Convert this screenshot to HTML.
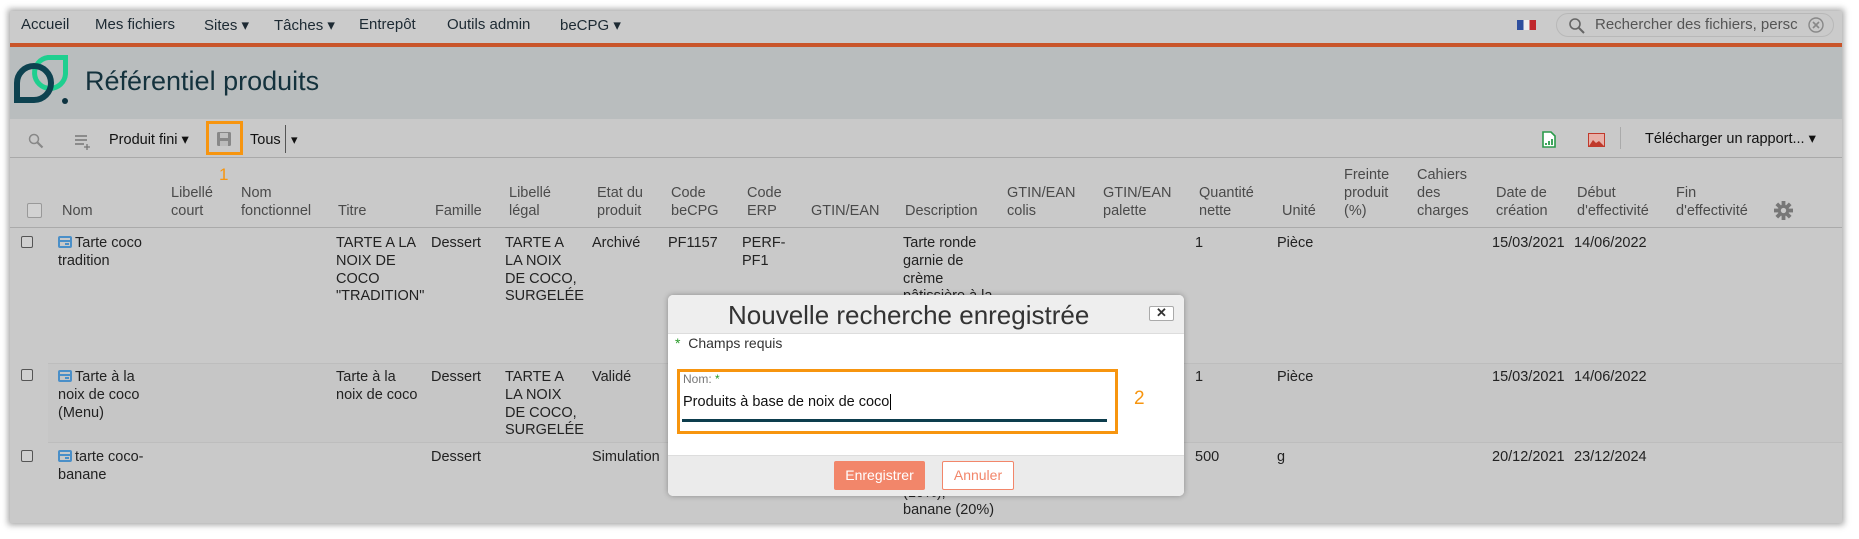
<!DOCTYPE html>
<html><head><meta charset="utf-8">
<style>
*{margin:0;padding:0;box-sizing:border-box}
body{width:1859px;height:539px;background:#fff;position:relative;overflow:hidden;font-family:"Liberation Sans",sans-serif;color:#222}
#frame{position:absolute;left:10px;top:11px;width:1832px;height:512px;background:#c9c9c9;box-shadow:0 0 6px 2px rgba(0,0,0,.35);overflow:hidden}
.a{position:absolute;white-space:nowrap}
.nav{position:absolute;left:0;top:0;width:100%;height:32px;background:#cbcbcb}
.nav .a{top:5px;font-size:15px;color:#1d2a33}
.orl{position:absolute;left:0;top:32px;width:100%;height:4px;background:#c9552a}
.hdr{position:absolute;left:0;top:36px;width:100%;height:72px;background:#b9bdbe}
.tb{position:absolute;left:0;top:108px;width:100%;height:39px;border-bottom:1px solid #a9a9a9}
.th{font-size:14.5px;color:#4a4a4a;line-height:17.8px}
.td{font-size:14.5px;color:#222;line-height:17.8px}
.cb{position:absolute;width:12px;height:12px;border:1px solid #555;border-radius:2px;background:#d0d0d0}
.pi{display:inline-block;width:14px;height:12px;border:2px solid #4a8fc8;border-radius:2px;margin-right:3px;vertical-align:-1px;position:relative}
.pi:before{content:"";position:absolute;left:0;right:0;top:2px;height:2px;background:#4a8fc8}
.pi:after{content:"";position:absolute;right:1px;bottom:1px;width:4px;height:2px;background:#4a8fc8}
</style></head><body>
<div id="frame">
 <div class="nav">
  <span class="a" style="left:11px">Accueil</span>
  <span class="a" style="left:85px">Mes fichiers</span>
  <span class="a" style="left:194px">Sites ▾</span>
  <span class="a" style="left:264px">Tâches ▾</span>
  <span class="a" style="left:349px">Entrepôt</span>
  <span class="a" style="left:437px">Outils admin</span>
  <span class="a" style="left:550px">beCPG ▾</span>
  <div class="a" style="left:1507px;top:9px;width:19px;height:10px;background:linear-gradient(90deg,#2f4f9e 33%,#eee 33%,#eee 66%,#c0272d 66%)"></div>
  <div class="a" style="left:1546px;top:2px;width:278px;height:24px;border:1px solid #b8b8b8;border-radius:12px;background:#cacaca"></div>
  <svg class="a" style="left:1558px;top:6px" width="18" height="18" viewBox="0 0 18 18"><circle cx="7" cy="7" r="5" fill="none" stroke="#666" stroke-width="1.6"/><path d="M11 11l5 5" stroke="#666" stroke-width="2"/></svg>
  <span class="a" style="left:1585px;top:5px;color:#555;font-size:15px">Rechercher des fichiers, persc</span>
  <svg class="a" style="left:1797px;top:5px" width="18" height="18" viewBox="0 0 18 18"><circle cx="9" cy="9" r="7" fill="none" stroke="#888" stroke-width="1.4"/><path d="M6 6l6 6M12 6l-6 6" stroke="#888" stroke-width="1.6"/></svg>
 </div>
 <div class="orl"></div>
 <div class="hdr">
  <svg class="a" style="left:0px;top:3px" width="66" height="60" viewBox="0 0 66 60">
   <path d="M55.5 7.5 V24 A15.5 15.5 0 1 1 38 7.5 Z" fill="none" stroke="#1ecf8f" stroke-width="5"/>
   <path d="M7 50 V33 A17 17 0 1 1 24 50 Z" fill="none" stroke="#0d4250" stroke-width="6"/>
   <circle cx="55" cy="51" r="3" fill="#0d3340"/>
  </svg>
  <span class="a" style="left:75px;top:19px;font-size:27px;color:#14323d">Référentiel produits</span>
 </div>
 <div class="tb">
  <svg class="a" style="left:18px;top:14px" width="16" height="16" viewBox="0 0 16 16"><circle cx="6" cy="6" r="4.5" fill="none" stroke="#888" stroke-width="1.5"/><path d="M9.5 9.5l5 5" stroke="#888" stroke-width="2.2"/></svg>
  <svg class="a" style="left:64px;top:15px" width="16" height="16" viewBox="0 0 16 16"><path d="M1 2h12M1 6h12M1 10h9" stroke="#777" stroke-width="1.6"/><path d="M13 10v6M10 13h6" stroke="#777" stroke-width="1.3"/></svg>
  <span class="a" style="left:99px;top:13px;font-size:14.5px;color:#111">Produit fini ▾</span>
  <div class="a" style="left:196px;top:2px;width:37px;height:34px;border:3px solid #f7950f"></div>
  <svg class="a" style="left:206px;top:12px" width="16" height="16" viewBox="0 0 16 16"><rect x="1" y="1" width="14" height="14" rx="1.5" fill="#888"/><rect x="4" y="2" width="8" height="5" fill="#c0c0c0"/><rect x="4" y="10" width="8" height="5" fill="#bbb"/></svg>
  <span class="a" style="left:240px;top:13px;font-size:14.5px;color:#111">Tous</span>
  <div class="a" style="left:275px;top:6px;width:1px;height:28px;background:#555"></div>
  <span class="a" style="left:281px;top:13px;font-size:13px;color:#111">▾</span>
  <svg class="a" style="left:1532px;top:12px" width="14" height="17" viewBox="0 0 14 17"><path d="M1 1h8l4 4v11H1z" fill="#fff" stroke="#2a9a4a" stroke-width="1.6"/><path d="M4 14v-2M7 14v-4M10 14v-6" stroke="#2a9a4a" stroke-width="1.8"/></svg>
  <svg class="a" style="left:1578px;top:14px" width="17" height="14" viewBox="0 0 17 14"><rect x="0.5" y="0.5" width="16" height="13" fill="#e8b0a8" stroke="#c0392b"/><path d="M1 13L5 7l3 3 3-2 5 5z" fill="#c0392b"/></svg>
  <div class="a" style="left:1610px;top:8px;width:1px;height:22px;background:#aaa"></div>
  <span class="a" style="left:1635px;top:12px;font-size:14.5px;color:#111">Télécharger un rapport... ▾</span>
 </div>
 <span class="a" style="left:209px;top:154px;font-size:17px;color:#f7950f">1</span>
 <!-- header -->
 <div class="cb" style="left:17px;top:192px;width:15px;height:15px;border-color:#999;background:#d2d2d2"></div>
 <div class="a th" style="left:52px;top:192px">Nom</div>
 <div class="a th" style="left:161px;top:174px">Libellé<br>court</div>
 <div class="a th" style="left:231px;top:174px">Nom<br>fonctionnel</div>
 <div class="a th" style="left:328px;top:192px">Titre</div>
 <div class="a th" style="left:425px;top:192px">Famille</div>
 <div class="a th" style="left:499px;top:174px">Libellé<br>légal</div>
 <div class="a th" style="left:587px;top:174px">Etat du<br>produit</div>
 <div class="a th" style="left:661px;top:174px">Code<br>beCPG</div>
 <div class="a th" style="left:737px;top:174px">Code<br>ERP</div>
 <div class="a th" style="left:801px;top:192px">GTIN/EAN</div>
 <div class="a th" style="left:895px;top:192px">Description</div>
 <div class="a th" style="left:997px;top:174px">GTIN/EAN<br>colis</div>
 <div class="a th" style="left:1093px;top:174px">GTIN/EAN<br>palette</div>
 <div class="a th" style="left:1189px;top:174px">Quantité<br>nette</div>
 <div class="a th" style="left:1272px;top:192px">Unité</div>
 <div class="a th" style="left:1334px;top:156px">Freinte<br>produit<br>(%)</div>
 <div class="a th" style="left:1407px;top:156px">Cahiers<br>des<br>charges</div>
 <div class="a th" style="left:1486px;top:174px">Date de<br>création</div>
 <div class="a th" style="left:1567px;top:174px">Début<br>d'effectivité</div>
 <div class="a th" style="left:1666px;top:174px">Fin<br>d'effectivité</div>
 <svg class="a" style="left:1764px;top:190px" width="19" height="19" viewBox="0 0 20 20"><g fill="#777"><circle cx="10" cy="10" r="6"/><rect x="8" y="0" width="4" height="20"/><rect x="0" y="8" width="20" height="4"/><rect x="8" y="0" width="4" height="20" transform="rotate(45 10 10)"/><rect x="8" y="0" width="4" height="20" transform="rotate(-45 10 10)"/></g><circle cx="10" cy="10" r="2.8" fill="#c9c9c9"/></svg>
 <div class="a" style="left:0;top:216px;width:100%;height:1px;background:#aaa"></div>
 <!-- row1 -->
 <div class="cb" style="left:11px;top:225px"></div>
 <div class="a td" style="left:48px;top:224px"><span class="pi"></span>Tarte coco<br>tradition</div>
 <div class="a td" style="left:326px;top:224px">TARTE A LA<br>NOIX DE<br>COCO<br>"TRADITION"</div>
 <div class="a td" style="left:421px;top:224px">Dessert</div>
 <div class="a td" style="left:495px;top:224px">TARTE A<br>LA NOIX<br>DE COCO,<br>SURGELÉE</div>
 <div class="a td" style="left:582px;top:224px">Archivé</div>
 <div class="a td" style="left:658px;top:224px">PF1157</div>
 <div class="a td" style="left:732px;top:224px">PERF-<br>PF1</div>
 <div class="a td" style="left:893px;top:224px">Tarte ronde<br>garnie de<br>crème<br>pâtissière à la</div>
 <div class="a td" style="left:1185px;top:224px">1</div>
 <div class="a td" style="left:1267px;top:224px">Pièce</div>
 <div class="a td" style="left:1482px;top:224px">15/03/2021</div>
 <div class="a td" style="left:1564px;top:224px">14/06/2022</div>
 <div class="a" style="left:38px;top:352px;width:1794px;height:1px;background:#bdbdbd"></div>
 <!-- row2 -->
 <div class="a" style="left:38px;top:353px;width:1794px;height:78px;background:#c6c6c6"></div>
 <div class="cb" style="left:11px;top:358px"></div>
 <div class="a td" style="left:48px;top:358px"><span class="pi"></span>Tarte à la<br>noix de coco<br>(Menu)</div>
 <div class="a td" style="left:326px;top:358px">Tarte à la<br>noix de coco</div>
 <div class="a td" style="left:421px;top:358px">Dessert</div>
 <div class="a td" style="left:495px;top:358px">TARTE A<br>LA NOIX<br>DE COCO,<br>SURGELÉE</div>
 <div class="a td" style="left:582px;top:358px">Validé</div>
 <div class="a td" style="left:1185px;top:358px">1</div>
 <div class="a td" style="left:1267px;top:358px">Pièce</div>
 <div class="a td" style="left:1482px;top:358px">15/03/2021</div>
 <div class="a td" style="left:1564px;top:358px">14/06/2022</div>
 <div class="a" style="left:38px;top:431px;width:1794px;height:1px;background:#bdbdbd"></div>
 <!-- row3 -->
 <div class="cb" style="left:11px;top:439px"></div>
 <div class="a td" style="left:48px;top:438px"><span class="pi"></span>tarte coco-<br>banane</div>
 <div class="a td" style="left:421px;top:438px">Dessert</div>
 <div class="a td" style="left:582px;top:438px">Simulation</div>
 <div class="a td" style="left:893px;top:438px">Tarte coco-<br>banane, coco<br>(10%),<br>banane (20%)</div>
 <div class="a td" style="left:1185px;top:438px">500</div>
 <div class="a td" style="left:1267px;top:438px">g</div>
 <div class="a td" style="left:1482px;top:438px">20/12/2021</div>
 <div class="a td" style="left:1564px;top:438px">23/12/2024</div>
</div>
<!-- modal -->
<div class="a" style="left:668px;top:295px;width:516px;height:201px;background:#fff;border-radius:5px;box-shadow:0 0 6px rgba(0,0,0,.3);overflow:hidden">
 <div class="a" style="left:0;top:0;width:100%;height:39px;background:#eeeeee;border-bottom:1px solid #ddd"></div>
 <div class="a" style="left:60px;top:5px;font-size:26px;color:#333">Nouvelle recherche enregistrée</div>
 <div class="a" style="left:481px;top:11px;width:25px;height:15px;border:1px solid #aaa;background:#fff;border-radius:2px"></div>
 <div class="a" style="left:488px;top:10px;font-size:13px;font-weight:bold;color:#333">✕</div>
 <div class="a" style="left:7px;top:40px;font-size:14px;color:#333"><span style="color:#2a9a2a">*</span>&nbsp; Champs requis</div>
 <div class="a" style="left:9px;top:74px;width:441px;height:65px;border:3px solid #f7950f"></div>
 <div class="a" style="left:15px;top:77px;font-size:12px;color:#777">Nom: <span style="color:#2a9a2a">*</span></div>
 <div class="a" style="left:15px;top:99px;font-size:14.5px;color:#111">Produits à base de noix de coco<span style="border-left:1px solid #000;margin-left:1px"></span></div>
 <div class="a" style="left:14px;top:124px;width:425px;height:3px;background:#0d3d4d"></div>
 <div class="a" style="left:0;top:160px;width:100%;height:41px;background:#ebebeb;border-top:1px solid #ddd"></div>
 <div class="a" style="left:166px;top:166px;width:91px;height:29px;background:#f2866a;border-radius:2px;color:#fff;font-size:14px;text-align:center;line-height:29px">Enregistrer</div>
 <div class="a" style="left:274px;top:166px;width:72px;height:29px;background:#fff;border:1px solid #f2866a;border-radius:2px;color:#f2866a;font-size:14px;text-align:center;line-height:27px">Annuler</div>
</div>
<div class="a" style="left:1134px;top:388px;font-size:19px;color:#f7950f">2</div>
</body></html>
